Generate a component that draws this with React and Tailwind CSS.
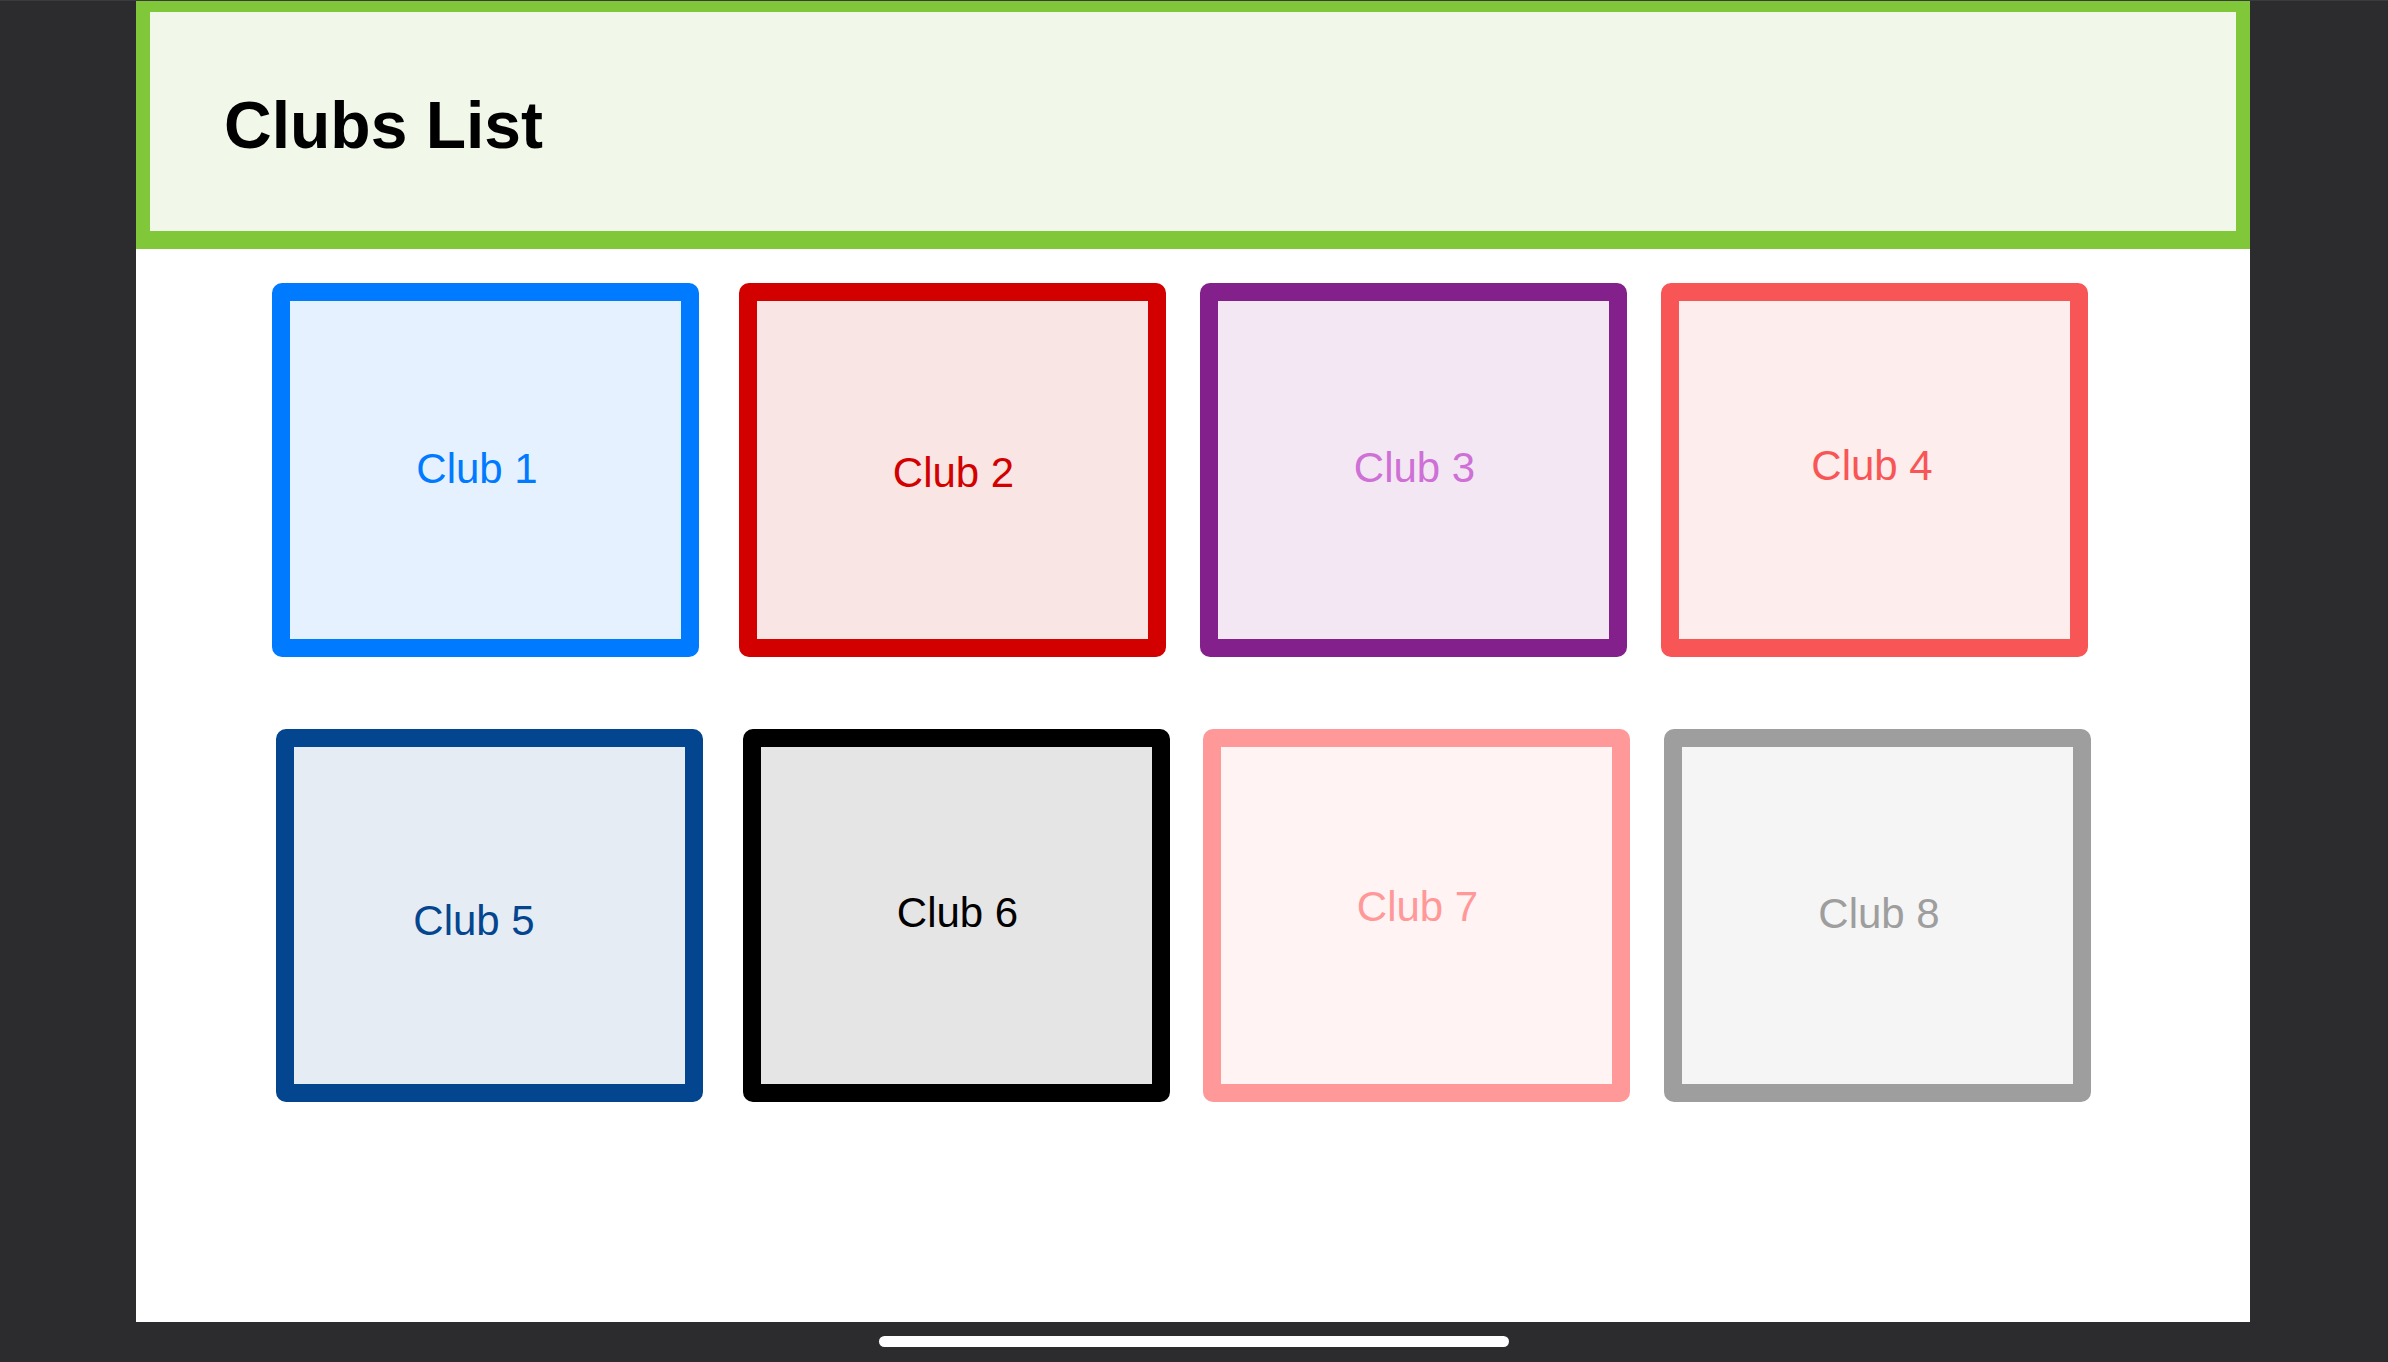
const rowOne = [
  { name: "Club 1", box: "ml-[136px] border-[#007aff] bg-[#e5f1ff] text-[#007aff]", nudge: "pr-[17px] pb-[3px]" },
  { name: "Club 2", box: "ml-[40px] border-[#d30000] bg-[#fae5e5] text-[#d30000]", nudge: "pl-[2px] pt-[5px]" },
  { name: "Club 3", box: "ml-[34px] border-[#84208c] bg-[#f3e7f3] text-[#cf70d6]", nudge: "pl-[2px] pb-[5px]" },
  { name: "Club 4", box: "ml-[34px] border-[#f85656] bg-[#feeded] text-[#f85656]", nudge: "pr-[5px] pb-[8px]" },
]

const rowTwo = [
  { name: "Club 5", box: "ml-[140px] border-[#03468f] bg-[#e6ecf4] text-[#03468f]", nudge: "pr-[31px] pt-[10px]" },
  { name: "Club 6", box: "ml-[40px] border-black bg-[#e5e5e5] text-black", nudge: "pl-[2px] pb-[6px]" },
  { name: "Club 7", box: "ml-[33px] border-[#ff9999] bg-[#fff3f3] text-[#ff9999]", nudge: "pl-[2px] pb-[18px]" },
  { name: "Club 8", box: "ml-[34px] border-[#9e9e9e] bg-[#f5f5f5] text-[#9e9e9e]", nudge: "pl-[3px] pb-[4px]" },
]

const ClubCard = ({ name, box, nudge }) => {
  return (
    <div className={`w-[427px] h-full shrink-0 border-[18px] rounded-[10px] flex items-center justify-center ${box} ${nudge}`}>
      <span className="text-[42px] leading-none">{name}</span>
    </div>
  )
}

export const App = () => {
  return (
    <div className="w-[2388px] h-[1362px] bg-[#2c2c2e] flex flex-col overflow-hidden" style={{ fontFamily: '"Liberation Sans", Arial, sans-serif' }}>
      <div className="h-px w-full bg-[#3b3b3d]"></div>
      <main className="ml-[136px] w-[2114px] h-[1321px] bg-white flex flex-col">
        <header className="h-[248px] bg-[#f1f8e9] border-[#80c739] border-t-[11px] border-b-[18px] border-x-[14px] pl-[74px] pt-[80px]">
          <h1 className="text-[66px] font-bold leading-none text-black">Clubs List</h1>
        </header>
        <div className="flex h-[374px] mt-[34px]">
          {rowOne.map((club) => (
            <ClubCard key={club.name} {...club} />
          ))}
        </div>
        <div className="flex h-[373px] mt-[72px]">
          {rowTwo.map((club) => (
            <ClubCard key={club.name} {...club} />
          ))}
        </div>
      </main>
      <div className="flex-1 flex justify-center pt-[14px]">
        <div className="w-[630px] h-[11px] rounded-full bg-white"></div>
      </div>
    </div>
  )
}

export default App
